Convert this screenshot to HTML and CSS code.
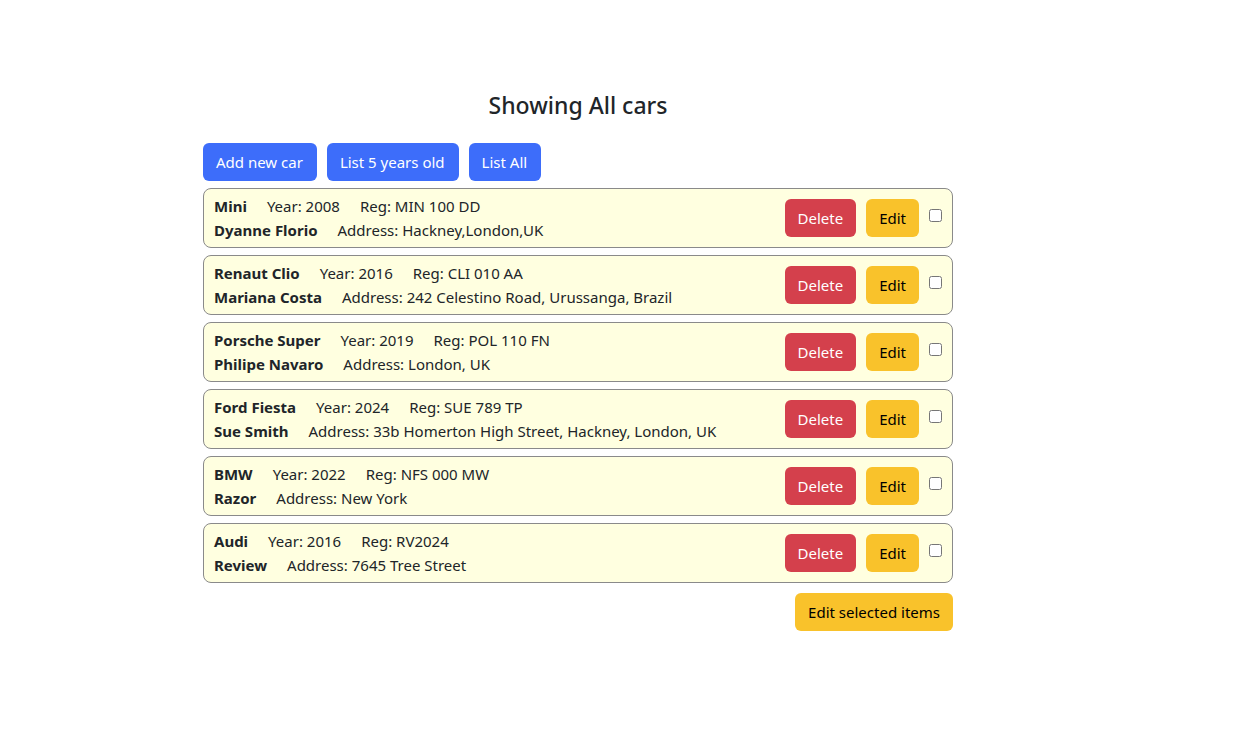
FILE: index.html
```html
<!DOCTYPE html>
<html lang="en">
<head>
<meta charset="utf-8">
<title>Cars</title>
<link rel="stylesheet" href="styles.css">
</head>
<body>
<div class="page">
  <h4 class="title">Showing All cars</h4>
  <div class="toolbar">
    <button class="btn btn-primary">Add new car</button>
    <button class="btn btn-primary">List 5 years old</button>
    <button class="btn btn-primary">List All</button>
  </div>
  <ul class="cars">
    <li class="car">
      <div class="info">
        <div class="line"><b>Mini</b><span>Year: 2008</span><span>Reg: MIN 100 DD</span></div>
        <div class="line"><b>Dyanne Florio</b><span>Address: Hackney,London,UK</span></div>
      </div>
      <div class="actions"><button class="btn btn-danger">Delete</button><button class="btn btn-warning">Edit</button><input type="checkbox" class="check"></div>
    </li>
    <li class="car">
      <div class="info">
        <div class="line"><b>Renaut Clio</b><span>Year: 2016</span><span>Reg: CLI 010 AA</span></div>
        <div class="line"><b>Mariana Costa</b><span>Address: 242 Celestino Road, Urussanga, Brazil</span></div>
      </div>
      <div class="actions"><button class="btn btn-danger">Delete</button><button class="btn btn-warning">Edit</button><input type="checkbox" class="check"></div>
    </li>
    <li class="car">
      <div class="info">
        <div class="line"><b>Porsche Super</b><span>Year: 2019</span><span>Reg: POL 110 FN</span></div>
        <div class="line"><b>Philipe Navaro</b><span>Address: London, UK</span></div>
      </div>
      <div class="actions"><button class="btn btn-danger">Delete</button><button class="btn btn-warning">Edit</button><input type="checkbox" class="check"></div>
    </li>
    <li class="car">
      <div class="info">
        <div class="line"><b>Ford Fiesta</b><span>Year: 2024</span><span>Reg: SUE 789 TP</span></div>
        <div class="line"><b>Sue Smith</b><span>Address: 33b Homerton High Street, Hackney, London, UK</span></div>
      </div>
      <div class="actions"><button class="btn btn-danger">Delete</button><button class="btn btn-warning">Edit</button><input type="checkbox" class="check"></div>
    </li>
    <li class="car">
      <div class="info">
        <div class="line"><b>BMW</b><span>Year: 2022</span><span>Reg: NFS 000 MW</span></div>
        <div class="line"><b>Razor</b><span>Address: New York</span></div>
      </div>
      <div class="actions"><button class="btn btn-danger">Delete</button><button class="btn btn-warning">Edit</button><input type="checkbox" class="check"></div>
    </li>
    <li class="car">
      <div class="info">
        <div class="line"><b>Audi</b><span>Year: 2016</span><span>Reg: RV2024</span></div>
        <div class="line"><b>Review</b><span>Address: 7645 Tree Street</span></div>
      </div>
      <div class="actions"><button class="btn btn-danger">Delete</button><button class="btn btn-warning">Edit</button><input type="checkbox" class="check"></div>
    </li>
  </ul>
  <div class="footer">
    <button class="btn btn-warning">Edit selected items</button>
  </div>
</div>
</body>
</html>
```
FILE: styles.css
```css
* { box-sizing: border-box; }
body {
  margin: 0;
  font-family: "Noto Sans", "Open Sans", sans-serif;
  font-size: 15px;
  line-height: 24px;
  color: #212529;
  background: #fff;
}
.page {
  width: 750px;
  margin-left: 203px;
  padding-top: 91px;
}
.title {
  margin: 0 0 23px;
  text-align: center;
  font-size: 23px;
  line-height: 29px;
  font-weight: 500;
}
.toolbar {
  display: flex;
  gap: 10px;
  margin-bottom: 7px;
}
.btn {
  font-family: inherit;
  font-size: 15px;
  line-height: 24px;
  padding: 6px 12px;
  border: 1px solid transparent;
  border-radius: 6px;
  cursor: pointer;
}
.toolbar .btn { padding: 6px 13px 6px 12px; }
.btn-primary { background: #3d6dfa; color: #fff; }
.btn-danger { background: #d4404c; color: #fff; }
.btn-warning { background: #f9c22b; color: #000; }
.cars {
  list-style: none;
  margin: 0;
  padding: 0;
}
.car {
  display: flex;
  align-items: center;
  justify-content: space-between;
  height: 60px;
  padding: 5px 10px;
  margin-bottom: 7px;
  background: #ffffe0;
  border: 1px solid #8a8a8a;
  border-radius: 8px;
}
.line b { font-weight: 700; margin-right: 20px; }
.line span { margin-right: 20px; }
.actions {
  display: flex;
  align-items: flex-start;
  gap: 10px;
}
.check {
  width: 13px;
  height: 13px;
  margin: 10px 0 0;
}
.footer {
  display: flex;
  justify-content: flex-end;
  margin-top: 10px;
}
```
